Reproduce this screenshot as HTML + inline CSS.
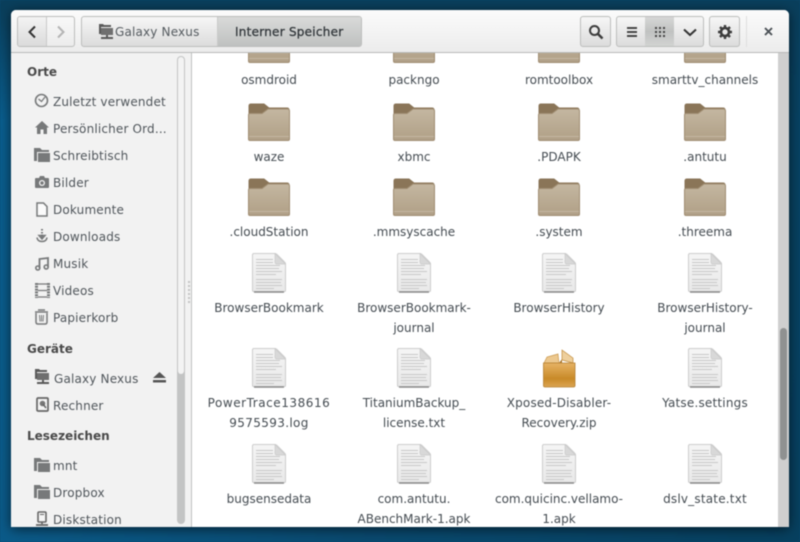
<!DOCTYPE html>
<html><head><meta charset="utf-8"><style>
html,body{margin:0;padding:0}
body{width:800px;height:542px;overflow:hidden;position:relative;background:#0b4a70;font-family:"DejaVu Sans","Liberation Sans",sans-serif}
#all{position:absolute;left:0;top:0;width:800px;height:542px;filter:blur(.4px)}
#bg{position:absolute;inset:0;background:linear-gradient(100deg,#0a5f90 0%,#0b5a88 12%,#0a4a70 50%,#07405f 100%)}
#bg2{position:absolute;inset:0;background:linear-gradient(180deg,#0a3f5c 0,#0a3f5c 10px,transparent 120px)}
#win{position:absolute;left:11px;top:10px;width:778px;height:517px;background:#fff;border-radius:5px 5px 0 0;box-shadow:0 2px 12px rgba(0,0,0,.6);overflow:hidden}
#hdr{position:absolute;left:11px;top:10px;width:778px;height:43px;background:linear-gradient(#fbfbfb,#ececec);border-bottom:1px solid #b8bab9;border-radius:5px 5px 0 0;box-sizing:border-box}
.btn{position:absolute;top:16px;height:31px;box-sizing:border-box;border:1px solid #bcbdbc;border-radius:3px;background:linear-gradient(#f6f6f6,#dcdcdc)}
.t{position:absolute;font-size:12px;line-height:16px;color:#454c52;white-space:nowrap}
.c{text-align:center;width:144px}
.s{position:absolute;font-size:12px;line-height:16px;color:#50565b;white-space:nowrap;letter-spacing:.17px}
.h{position:absolute;font-size:12px;line-height:16px;color:#4a4a4a;font-weight:bold;white-space:nowrap}
#side{position:absolute;left:11px;top:53px;width:180px;height:474px;background:#f2f2f2;border-right:1px solid #bfc1c0;box-sizing:content-box}
svg{position:absolute;overflow:visible}
</style></head><body>
<svg width="0" height="0" style="position:absolute"><defs>
<linearGradient id="fg" x1="0" y1="0" x2="0" y2="1"><stop offset="0" stop-color="#c4b7a1"/><stop offset=".85" stop-color="#b3a38a"/><stop offset="1" stop-color="#b0a088"/></linearGradient>
<linearGradient id="dg" x1="0" y1="0" x2="0" y2="1"><stop offset="0" stop-color="#f5f5f5"/><stop offset="1" stop-color="#e9e9e9"/></linearGradient>
<linearGradient id="bx" x1="0" y1="0" x2="0" y2="1"><stop offset="0" stop-color="#e6b365"/><stop offset=".65" stop-color="#c98a28"/><stop offset="1" stop-color="#dba552"/></linearGradient>
<symbol id="folder" viewBox="0 0 42 38" width="42" height="38">
<path d="M1 3Q1 1 3 1H16L21 5H39Q41 5 41 7V14H1Z" fill="#8a7558" stroke="#8a7558"/>
<path d="M0.5 36V12Q0.5 10.5 2 10.5H14L20 6H39.5Q41.5 6 41.5 8V36Q41.5 37.5 40 37.5H2Q0.5 37.5 0.5 36Z" fill="url(#fg)" stroke="#a08d72"/>
<path d="M1 33.5H41" stroke="#c4b7a2" stroke-width="1"/>
</symbol>
<symbol id="doc" viewBox="0 0 34 40" width="34" height="40">
<path d="M0.5 2Q0.5 .5 2 .5H23Q24 .5 25 1.5L32.5 9Q33.5 10 33.5 11V37.5Q33.5 38.5 32.5 38.5H1.5Q.5 38.5 .5 37.5Z" fill="url(#dg)" stroke="#cdcdcd"/>
<path d="M23 .5V9Q23 11 25 11H33.5Z" fill="#d8d8d8" stroke="#c9c9c9" stroke-width=".7"/>
<path d="M2 39H32" stroke="#8a8a8a" stroke-width="1.6"/>
<g stroke="#c8c8c8" stroke-width="1.1"><path d="M4 6.5H21M4 9.5H21M4 12.5H28M4 15.5H27M4 18.5H30M4 21.5H24M4 26.5H30M4 29.5H29M4 32.5H30M4 35.5H22"/></g>
</symbol>
<symbol id="sf" viewBox="0 0 16 16" width="16" height="16"><path d="M0 1H6L8 3H15V5H3L3 14H0Z" fill="#77797a"/><path d="M4 6H16V15H4Z M1 2" fill="#77797a"/></symbol>
<symbol id="net" viewBox="0 0 16 16" width="16" height="16"><path d="M1 0H5L6 1H13V3H3V10H1Z" fill="#5a5a5a"/><path d="M3 4H15V11H3Z" fill="#6f6f6f"/><path d="M8 11H10V13H15V15H3V13H8Z" fill="#5a5a5a"/></symbol>
</defs></svg>
<div id="all">
<div id="bg"></div><div id="bg2"></div>
<div id="win"></div>

<div id="hdr"></div>
<!-- back forward -->
<div class="btn" style="left:17px;width:58px;top:16px;background:linear-gradient(#f8f8f8,#ececec)"></div>
<div style="position:absolute;left:18px;top:17px;width:28px;height:29px;background:linear-gradient(#f3f3f3,#dbdbdb);border-right:1px solid #c9c9c9;border-radius:2px 0 0 2px"></div>
<svg style="left:27px;top:26px" width="12" height="12"><path d="M8 .5L2.5 6L8 11.5" fill="none" stroke="#333" stroke-width="2"/></svg>
<svg style="left:55px;top:26px" width="12" height="12"><path d="M3 .5L8.5 6L3 11.5" fill="none" stroke="#b4b4b4" stroke-width="2"/></svg>
<!-- path bar -->
<div class="btn" style="left:81px;width:281px;overflow:hidden"><div style="position:absolute;left:135px;top:0;width:145px;height:29px;background:linear-gradient(#d9dad9,#bfc1c0);border-left:1px solid #c9cac9"></div></div>
<svg style="left:98px;top:24px" width="16" height="16"><use href="#net"/></svg>
<div class="t" style="left:115px;top:24px;font-size:12px;color:#545a5f;letter-spacing:.17px">Galaxy Nexus</div>
<div class="t" style="left:235px;top:24px;color:#33383c;font-size:12px;-webkit-text-stroke:.3px #33383c;letter-spacing:.25px">Interner Speicher</div>
<!-- search -->
<div class="btn" style="left:580px;width:31px"></div>
<svg style="left:588px;top:24px" width="16" height="16"><circle cx="6.5" cy="6.5" r="4.5" fill="none" stroke="#3c3c3c" stroke-width="2"/><path d="M10 10L14.5 14.5" stroke="#3c3c3c" stroke-width="2.5"/></svg>
<!-- view -->
<div class="btn" style="left:616px;width:88px;overflow:hidden"><div style="position:absolute;left:28px;top:0;width:29px;height:29px;background:linear-gradient(#d6d7d6,#c0c2c1,#d2d3d2)"></div></div>
<svg style="left:626px;top:26px" width="12" height="12"><path d="M1 2H11M1 6H11M1 10H11" stroke="#333" stroke-width="1.8"/></svg>
<svg style="left:655px;top:27px" width="12" height="10"><g fill="#444"><rect x="0" y="0" width="2" height="2"/><rect x="4" y="0" width="2" height="2"/><rect x="8" y="0" width="2" height="2"/><rect x="0" y="4" width="2" height="2"/><rect x="4" y="4" width="2" height="2"/><rect x="8" y="4" width="2" height="2"/><rect x="0" y="8" width="2" height="2"/><rect x="4" y="8" width="2" height="2"/><rect x="8" y="8" width="2" height="2"/></g></svg>
<svg style="left:683px;top:28px" width="14" height="9"><path d="M1 1.5L7 7L13 1.5" fill="none" stroke="#333" stroke-width="2"/></svg>
<!-- gear -->
<div class="btn" style="left:709px;width:31px"></div>
<svg style="left:718px;top:25px" width="14" height="14" viewBox="0 0 14 14"><circle cx="7" cy="7" r="4" fill="none" stroke="#3c3c3c" stroke-width="2.6"/><g stroke="#3c3c3c" stroke-width="2.4"><path d="M7 0V3M7 11V14M0 7H3M11 7H14M2 2L4 4M10 10L12 12M12 2L10 4M4 10L2 12"/></g></svg>
<div style="position:absolute;left:746px;top:16px;width:1px;height:31px;background:#dedede"></div>
<svg style="left:764px;top:27px" width="10" height="10"><path d="M1 1L8 8M8 1L1 8" stroke="#4a5055" stroke-width="1.9"/></svg>

<!-- content -->
<div style="position:absolute;left:192px;top:53px;width:586px;height:474px;overflow:hidden;background:#fff">
<svg style="left:56px;top:-28px" width="42" height="38"><use href="#folder"/></svg>
<svg style="left:201px;top:-28px" width="42" height="38"><use href="#folder"/></svg>
<svg style="left:346px;top:-28px" width="42" height="38"><use href="#folder"/></svg>
<svg style="left:492px;top:-28px" width="42" height="38"><use href="#folder"/></svg>
<svg style="left:56px;top:50px" width="42" height="38"><use href="#folder"/></svg>
<svg style="left:201px;top:50px" width="42" height="38"><use href="#folder"/></svg>
<svg style="left:346px;top:50px" width="42" height="38"><use href="#folder"/></svg>
<svg style="left:492px;top:50px" width="42" height="38"><use href="#folder"/></svg>
<svg style="left:56px;top:125px" width="42" height="38"><use href="#folder"/></svg>
<svg style="left:201px;top:125px" width="42" height="38"><use href="#folder"/></svg>
<svg style="left:346px;top:125px" width="42" height="38"><use href="#folder"/></svg>
<svg style="left:492px;top:125px" width="42" height="38"><use href="#folder"/></svg>
<svg style="left:60px;top:200px" width="34" height="40"><use href="#doc"/></svg>
<svg style="left:205px;top:200px" width="34" height="40"><use href="#doc"/></svg>
<svg style="left:350px;top:200px" width="34" height="40"><use href="#doc"/></svg>
<svg style="left:496px;top:200px" width="34" height="40"><use href="#doc"/></svg>
<svg style="left:60px;top:295px" width="34" height="40"><use href="#doc"/></svg>
<svg style="left:205px;top:295px" width="34" height="40"><use href="#doc"/></svg>
<svg style="left:351px;top:296px" width="33" height="39" viewBox="0 0 33 39"><path d="M1 14L4 8L15 5L16 14Z" fill="#ecc88f" stroke="#c9964a" stroke-width=".7"/><path d="M16 14H19V10Z" fill="#a8742a"/><path d="M19 1L30 9V14L19 11Z" fill="#eecf9c" stroke="#c08a38" stroke-width=".7"/><path d="M.5 14H32V36.5Q32 38 30.5 38H2Q.5 38 .5 36.5Z" fill="url(#bx)" stroke="#b57f2f" stroke-width=".8"/></svg>
<svg style="left:496px;top:295px" width="34" height="40"><use href="#doc"/></svg>
<svg style="left:60px;top:391px" width="34" height="40"><use href="#doc"/></svg>
<svg style="left:205px;top:391px" width="34" height="40"><use href="#doc"/></svg>
<svg style="left:350px;top:391px" width="34" height="40"><use href="#doc"/></svg>
<svg style="left:496px;top:391px" width="34" height="40"><use href="#doc"/></svg>

<div class="t c" style="left:5px;top:19px">osmdroid</div>
<div class="t c" style="left:150px;top:19px">packngo</div>
<div class="t c" style="left:295px;top:19px">romtoolbox</div>
<div class="t c" style="left:441px;top:19px">smarttv_channels</div>
<div class="t c" style="left:5px;top:96px">waze</div>
<div class="t c" style="left:150px;top:96px">xbmc</div>
<div class="t c" style="left:295px;top:96px">.PDAPK</div>
<div class="t c" style="left:441px;top:96px">.antutu</div>
<div class="t c" style="left:5px;top:171px">.cloudStation</div>
<div class="t c" style="left:150px;top:171px">.mmsyscache</div>
<div class="t c" style="left:295px;top:171px">.system</div>
<div class="t c" style="left:441px;top:171px">.threema</div>
<div class="t c" style="left:5px;top:247px">BrowserBookmark</div>
<div class="t c" style="left:150px;top:247px">BrowserBookmark-</div>
<div class="t c" style="left:150px;top:267px">journal</div>
<div class="t c" style="left:295px;top:247px">BrowserHistory</div>
<div class="t c" style="left:441px;top:247px">BrowserHistory-</div>
<div class="t c" style="left:441px;top:267px">journal</div>
<div class="t c" style="left:5px;top:342px;letter-spacing:.55px">PowerTrace138616</div>
<div class="t c" style="left:5px;top:362px;letter-spacing:.35px">9575593.log</div>
<div class="t c" style="left:150px;top:342px">TitaniumBackup_</div>
<div class="t c" style="left:150px;top:362px">license.txt</div>
<div class="t c" style="left:295px;top:342px;letter-spacing:.17px">Xposed-Disabler-</div>
<div class="t c" style="left:295px;top:362px">Recovery.zip</div>
<div class="t c" style="left:441px;top:342px;letter-spacing:.2px">Yatse.settings</div>
<div class="t c" style="left:5px;top:438px">bugsensedata</div>
<div class="t c" style="left:150px;top:438px">com.antutu.</div>
<div class="t c" style="left:150px;top:458px">ABenchMark-1.apk</div>
<div class="t c" style="left:295px;top:438px">com.quicinc.vellamo-</div>
<div class="t c" style="left:295px;top:458px">1.apk</div>
<div class="t c" style="left:441px;top:438px;letter-spacing:.2px">dslv_state.txt</div>
</div>
<!-- right scrollbar -->
<div style="position:absolute;left:778px;top:53px;width:11px;height:474px;background:#cfcfcf"></div>
<div style="position:absolute;left:780px;top:328px;width:7px;height:132px;background:#8f9191;border-radius:4px"></div>

<!-- sidebar -->
<div id="side"></div>
<div style="position:absolute;left:177px;top:56px;width:8px;height:468px;background:#c3c4c4;border-radius:4px"></div>
<div style="position:absolute;left:178px;top:57px;width:6px;height:317px;background:#f3f3f3;border-radius:3px"></div>
<div style="position:absolute;left:188px;top:281px;width:2px;height:24px;background:repeating-linear-gradient(#c4c4c4 0 2px,transparent 2px 4px)"></div>

<div class="h" style="left:27px;top:64px">Orte</div>
<div class="s" style="left:53px;top:94px">Zuletzt verwendet</div>
<div class="s" style="left:53px;top:121px">Persönlicher Ord...</div>
<div class="s" style="left:53px;top:148px">Schreibtisch</div>
<div class="s" style="left:53px;top:175px">Bilder</div>
<div class="s" style="left:53px;top:202px">Dokumente</div>
<div class="s" style="left:53px;top:229px">Downloads</div>
<div class="s" style="left:53px;top:256px">Musik</div>
<div class="s" style="left:53px;top:283px">Videos</div>
<div class="s" style="left:53px;top:310px">Papierkorb</div>
<div class="h" style="left:27px;top:341px">Geräte</div>
<div class="s" style="left:54px;top:371px">Galaxy Nexus</div>
<div class="s" style="left:53px;top:398px">Rechner</div>
<div class="h" style="left:27px;top:428px">Lesezeichen</div>
<div class="s" style="left:53px;top:458px">mnt</div>
<div class="s" style="left:53px;top:485px">Dropbox</div>
<div class="s" style="left:53px;top:512px;height:15px;overflow:hidden">Diskstation</div>

<svg style="left:34px;top:93px" width="15" height="15"><circle cx="7.5" cy="7.5" r="6" fill="none" stroke="#77797a" stroke-width="1.6"/><path d="M4.5 6L7.5 8.5L11 4" fill="none" stroke="#77797a" stroke-width="1.3"/></svg>
<svg style="left:35px;top:121px" width="14" height="13"><path d="M7 0L14 6.5H12V13H8.5V8.5H5.5V13H2V6.5H0Z" fill="#77797a"/></svg>
<svg style="left:34px;top:147px" width="16" height="16"><use href="#sf"/></svg>
<svg style="left:35px;top:176px" width="14" height="12"><path d="M1 2H4L5 0H9L10 2H13Q14 2 14 3V11Q14 12 13 12H1Q0 12 0 11V3Q0 2 1 2Z" fill="#77797a"/><circle cx="7" cy="7" r="3" fill="#f2f2f2"/><circle cx="7" cy="7" r="1.7" fill="#77797a"/></svg>
<svg style="left:36px;top:202px" width="12" height="15"><path d="M1 1H7.5L11 4.5V14H1Z" fill="#fbfbfb" stroke="#77797a" stroke-width="1.5"/></svg>
<svg style="left:36px;top:229px" width="12" height="15"><path d="M6 0V1.5M6 3V4.5M6 5.5V9" stroke="#77797a" stroke-width="2"/><path d="M3 6.5L6 10L9 6.5ZM1 8.5Q1.5 12.5 6 12.5Q10.5 12.5 11 8.5" fill="none" stroke="#77797a" stroke-width="1.5"/></svg>
<svg style="left:35px;top:257px" width="15" height="14"><path d="M4.5 11V2L13 1V10" fill="none" stroke="#77797a" stroke-width="1.8"/><circle cx="2.8" cy="11" r="2" fill="none" stroke="#77797a" stroke-width="1.6"/><circle cx="11.2" cy="10" r="2" fill="none" stroke="#77797a" stroke-width="1.6"/></svg>
<svg style="left:35px;top:283px" width="15" height="15"><path d="M1.5 0V15M13.5 0V15" stroke="#77797a" stroke-width="3" stroke-dasharray="2 .8"/><path d="M3 7.5H12M3 1H12M3 14H12" stroke="#77797a" stroke-width="1.3"/></svg>
<svg style="left:34px;top:309px" width="15" height="16"><path d="M1 3H14M4 1H11" stroke="#77797a" stroke-width="1.6"/><path d="M2 4V13Q2 15 4 15H11Q13 15 13 13V4" fill="none" stroke="#77797a" stroke-width="1.5"/><path d="M5.5 6L6 12.5M7.5 6V12.5M9.5 6L9 12.5" stroke="#77797a"/></svg>
<svg style="left:34px;top:369px" width="16" height="16"><use href="#net"/></svg>
<svg style="left:153px;top:372px" width="13" height="11"><path d="M6.5 0L13 6H0Z" fill="#555"/><rect x="0" y="8" width="13" height="2.5" fill="#555"/></svg>
<svg style="left:36px;top:397px" width="13" height="15"><rect x="1" y="1" width="11" height="13" rx="1" fill="#f4f4f4" stroke="#666" stroke-width="1.7"/><circle cx="6.5" cy="6.5" r="2.8" fill="#777"/><path d="M7 7L10 11" stroke="#666" stroke-width="1.5"/></svg>
<svg style="left:34px;top:457px" width="16" height="16"><use href="#sf"/></svg>
<svg style="left:34px;top:484px" width="16" height="16"><use href="#sf"/></svg>
<svg style="left:35px;top:511px" width="14" height="16"><rect x="3" y="1" width="8" height="10" rx="1" fill="#f4f4f4" stroke="#666" stroke-width="1.6"/><path d="M5 3.5H9" stroke="#666"/><path d="M7 11V13M1 14H13" stroke="#666" stroke-width="1.7"/></svg>
</div>
</body></html>
